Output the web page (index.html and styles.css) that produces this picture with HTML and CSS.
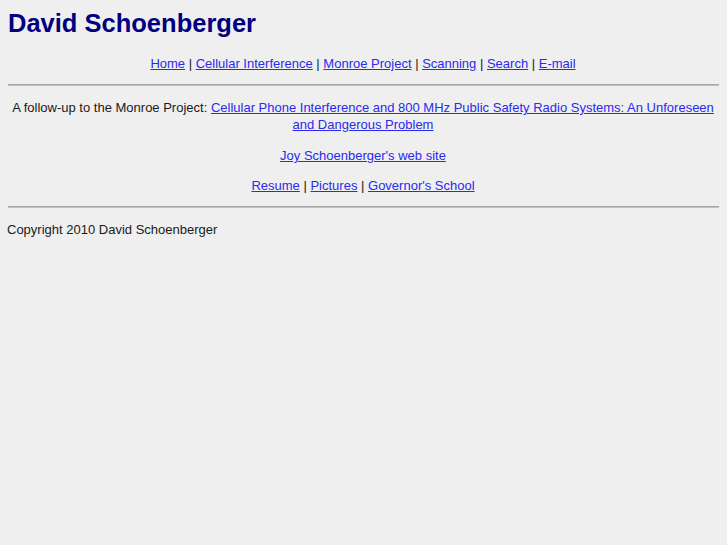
FILE: index.html
```html
<!DOCTYPE html>
<html lang="en">

<head>
    <meta charset="UTF-8">
    <title>David Schoenberger</title>
    <link rel="stylesheet" href="styles.css">
</head>

<body>
    <h1 class="title">David Schoenberger</h1>

    <p class="nav">
        <a href="#">Home</a> |
        <a href="#">Cellular Interference</a> |
        <a href="#">Monroe Project</a> |
        <a href="#">Scanning</a> |
        <a href="#">Search</a> |
        <a href="#">E-mail</a>
    </p>

    <hr>

    <p class="center follow">A follow-up to the Monroe Project: <a href="#">Cellular Phone Interference and 800 MHz Public Safety Radio Systems: An Unforeseen and Dangerous Problem</a></p>

    <p class="center"><a href="#">Joy Schoenberger's web site</a></p>

    <p class="center links">
        <a href="#">Resume</a> |
        <a href="#">Pictures</a> |
        <a href="#">Governor's School</a>
    </p>

    <hr>

    <p class="copyright">Copyright 2010 David Schoenberger</p>
</body>

</html>
```

FILE: styles.css
```css
body {
    margin: 8px 8px 8px 7px;
    background: #efefef;
    color: #1a1a1a;
    font-family: "Liberation Sans", Arial, sans-serif;
    font-size: 13px;
    line-height: 17px;
}

.title {
    margin: 0 0 17px 1px;
    font-size: 25.5px;
    line-height: 30px;
    color: #000080;
}

a {
    color: #2a2af0;
}

p {
    margin: 13px 0;
}

.nav {
    text-align: center;
    margin: 0 0 12px;
}

.center {
    text-align: center;
}

.follow {
    margin-bottom: 14px;
}

.links {
    margin-bottom: 12px;
}

hr {
    border: none;
    border-top: 1px solid #a8a8a8;
    border-bottom: 1px solid #c0c0c0;
    margin: 0 0 0 1px;
}

.copyright {
    margin: 13px 0;
}
```
